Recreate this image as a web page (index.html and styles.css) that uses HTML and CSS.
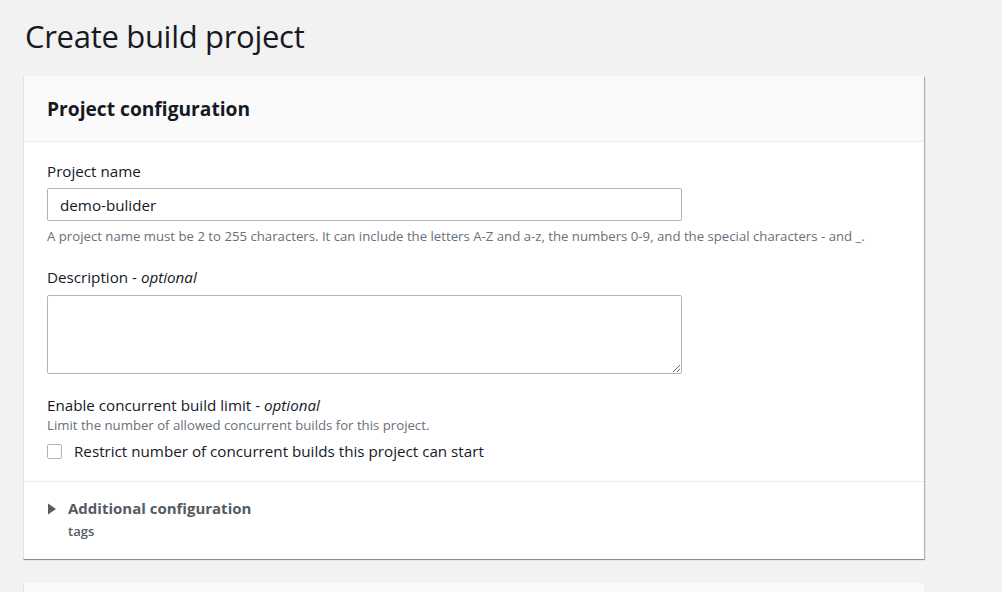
FILE: index.html
```html
<!DOCTYPE html>
<html lang="en">
<head>
<meta charset="utf-8">
<title>Create build project</title>
<link rel="stylesheet" href="styles.css">
</head>
<body>
<main class="page">
  <h1 class="title">Create build project</h1>
  <section class="card">
    <header class="card-header">
      <h2>Project configuration</h2>
    </header>
    <div class="card-body">
      <div class="field">
        <label class="label" for="pname">Project name</label>
        <input id="pname" class="input" type="text" value="demo-bulider">
        <p class="hint hint-below">A project name must be 2 to 255 characters. It can include the letters A-Z and a-z, the numbers 0-9, and the special characters - and _.</p>
      </div>
      <div class="field">
        <label class="label label-desc" for="desc">Description - <em>optional</em></label>
        <textarea id="desc" class="textarea"></textarea>
      </div>
      <div class="field field-last">
        <div class="label">Enable concurrent build limit - <em>optional</em></div>
        <p class="hint">Limit the number of allowed concurrent builds for this project.</p>
        <label class="check">
          <span class="box"></span>
          <span>Restrict number of concurrent builds this project can start</span>
        </label>
      </div>
    </div>
    <div class="expander">
      <div class="exp-row">
        <svg class="caret" width="10" height="12" viewBox="0 0 10 12"><path d="M1 0.5 L9 6 L1 11.5 Z" fill="#545b64"/></svg>
        <div>
          <div class="exp-title">Additional configuration</div>
          <div class="exp-sub">tags</div>
        </div>
      </div>
    </div>
  </section>
  <section class="card card-next"></section>
</main>
</body>
</html>
```
FILE: styles.css
```css
html, body {
  margin: 0;
  padding: 0;
  background: #f2f2f2;
  font-family: "Open Sans", "Noto Sans", sans-serif;
  color: #16191f;
}
.page {
  padding: 0 78px 0 23px;
  overflow: hidden;
  height: 592px;
}
.title {
  margin: 0;
  padding: 14px 0 0 2px;
  height: 76px;
  box-sizing: border-box;
  font-weight: 400;
  font-size: 31px;
  line-height: 44px;
  letter-spacing: -0.3px;
  color: #16191f;
}
.card {
  width: 900px;
  background: #fff;
  border-left: 1px solid #e2e2e2;
  box-shadow: 1px 1px 1px 0 rgba(0,22,22,0.3), 0 1px 0 0 rgba(0,28,36,0.2);
}
.card-header {
  background: #fafafa;
  border-bottom: 1px solid #eaeded;
  height: 66px;
  box-sizing: border-box;
  display: flex;
  align-items: center;
  padding: 0 23px;
}
.card-header h2 {
  margin: 0;
  font-size: 19.2px;
  font-weight: 700;
  color: #16191f;
}
.card-body {
  padding: 18px 23px 0;
}
.field {
  margin-bottom: 21px;
}
.field-last {
  margin-top: 3px;
  margin-bottom: 0;
  padding-bottom: 20px;
}
.label {
  display: block;
  font-size: 15.2px;
  line-height: 22px;
  color: #16191f;
  margin-bottom: 6px;
}
.label-desc {
  margin-bottom: 7px;
}
.label em {
  font-style: italic;
}
.input {
  display: block;
  box-sizing: border-box;
  width: 635px;
  height: 33px;
  border: 1px solid #aab7b8;
  border-radius: 2px;
  padding: 0 12px;
  font-family: inherit;
  font-size: 15.2px;
  color: #16191f;
  background: #fff;
  outline: none;
}
.textarea {
  display: block;
  box-sizing: border-box;
  width: 635px;
  height: 79px;
  border: 1px solid #aab7b8;
  border-radius: 2px;
  padding: 6px 12px;
  font-family: inherit;
  font-size: 15.2px;
  resize: vertical;
  background: #fff;
  outline: none;
  margin: 0;
}
.hint {
  margin: 0;
  font-size: 13.2px;
  line-height: 18px;
  color: #687078;
}
.hint-below {
  margin-top: 6px;
}
.field-last .label {
  margin-bottom: 2px;
  line-height: 20px;
}
.field-last .hint {
  line-height: 16px;
}
.check {
  display: flex;
  align-items: center;
  gap: 12px;
  margin-top: 8px;
  font-size: 15.2px;
  line-height: 20px;
  color: #16191f;
}
.box {
  width: 13px;
  height: 13px;
  border: 1px solid #aab7b8;
  border-radius: 2px;
  background: #fff;
  flex: none;
}
.expander {
  border-top: 1px solid #eaeded;
  padding: 15px 23px 19px;
}
.exp-row {
  display: flex;
  gap: 11px;
}
.caret {
  margin-top: 6px;
  flex: none;
}
.exp-title {
  font-size: 15px;
  font-weight: 700;
  line-height: 22px;
  color: #545b64;
}
.exp-sub {
  font-size: 13px;
  font-weight: 600;
  line-height: 18px;
  color: #545b64;
  margin-top: 3px;
}
.card-next {
  margin-top: 24px;
  height: 40px;
  background: #fafafa;
  box-shadow: none;
}
```
